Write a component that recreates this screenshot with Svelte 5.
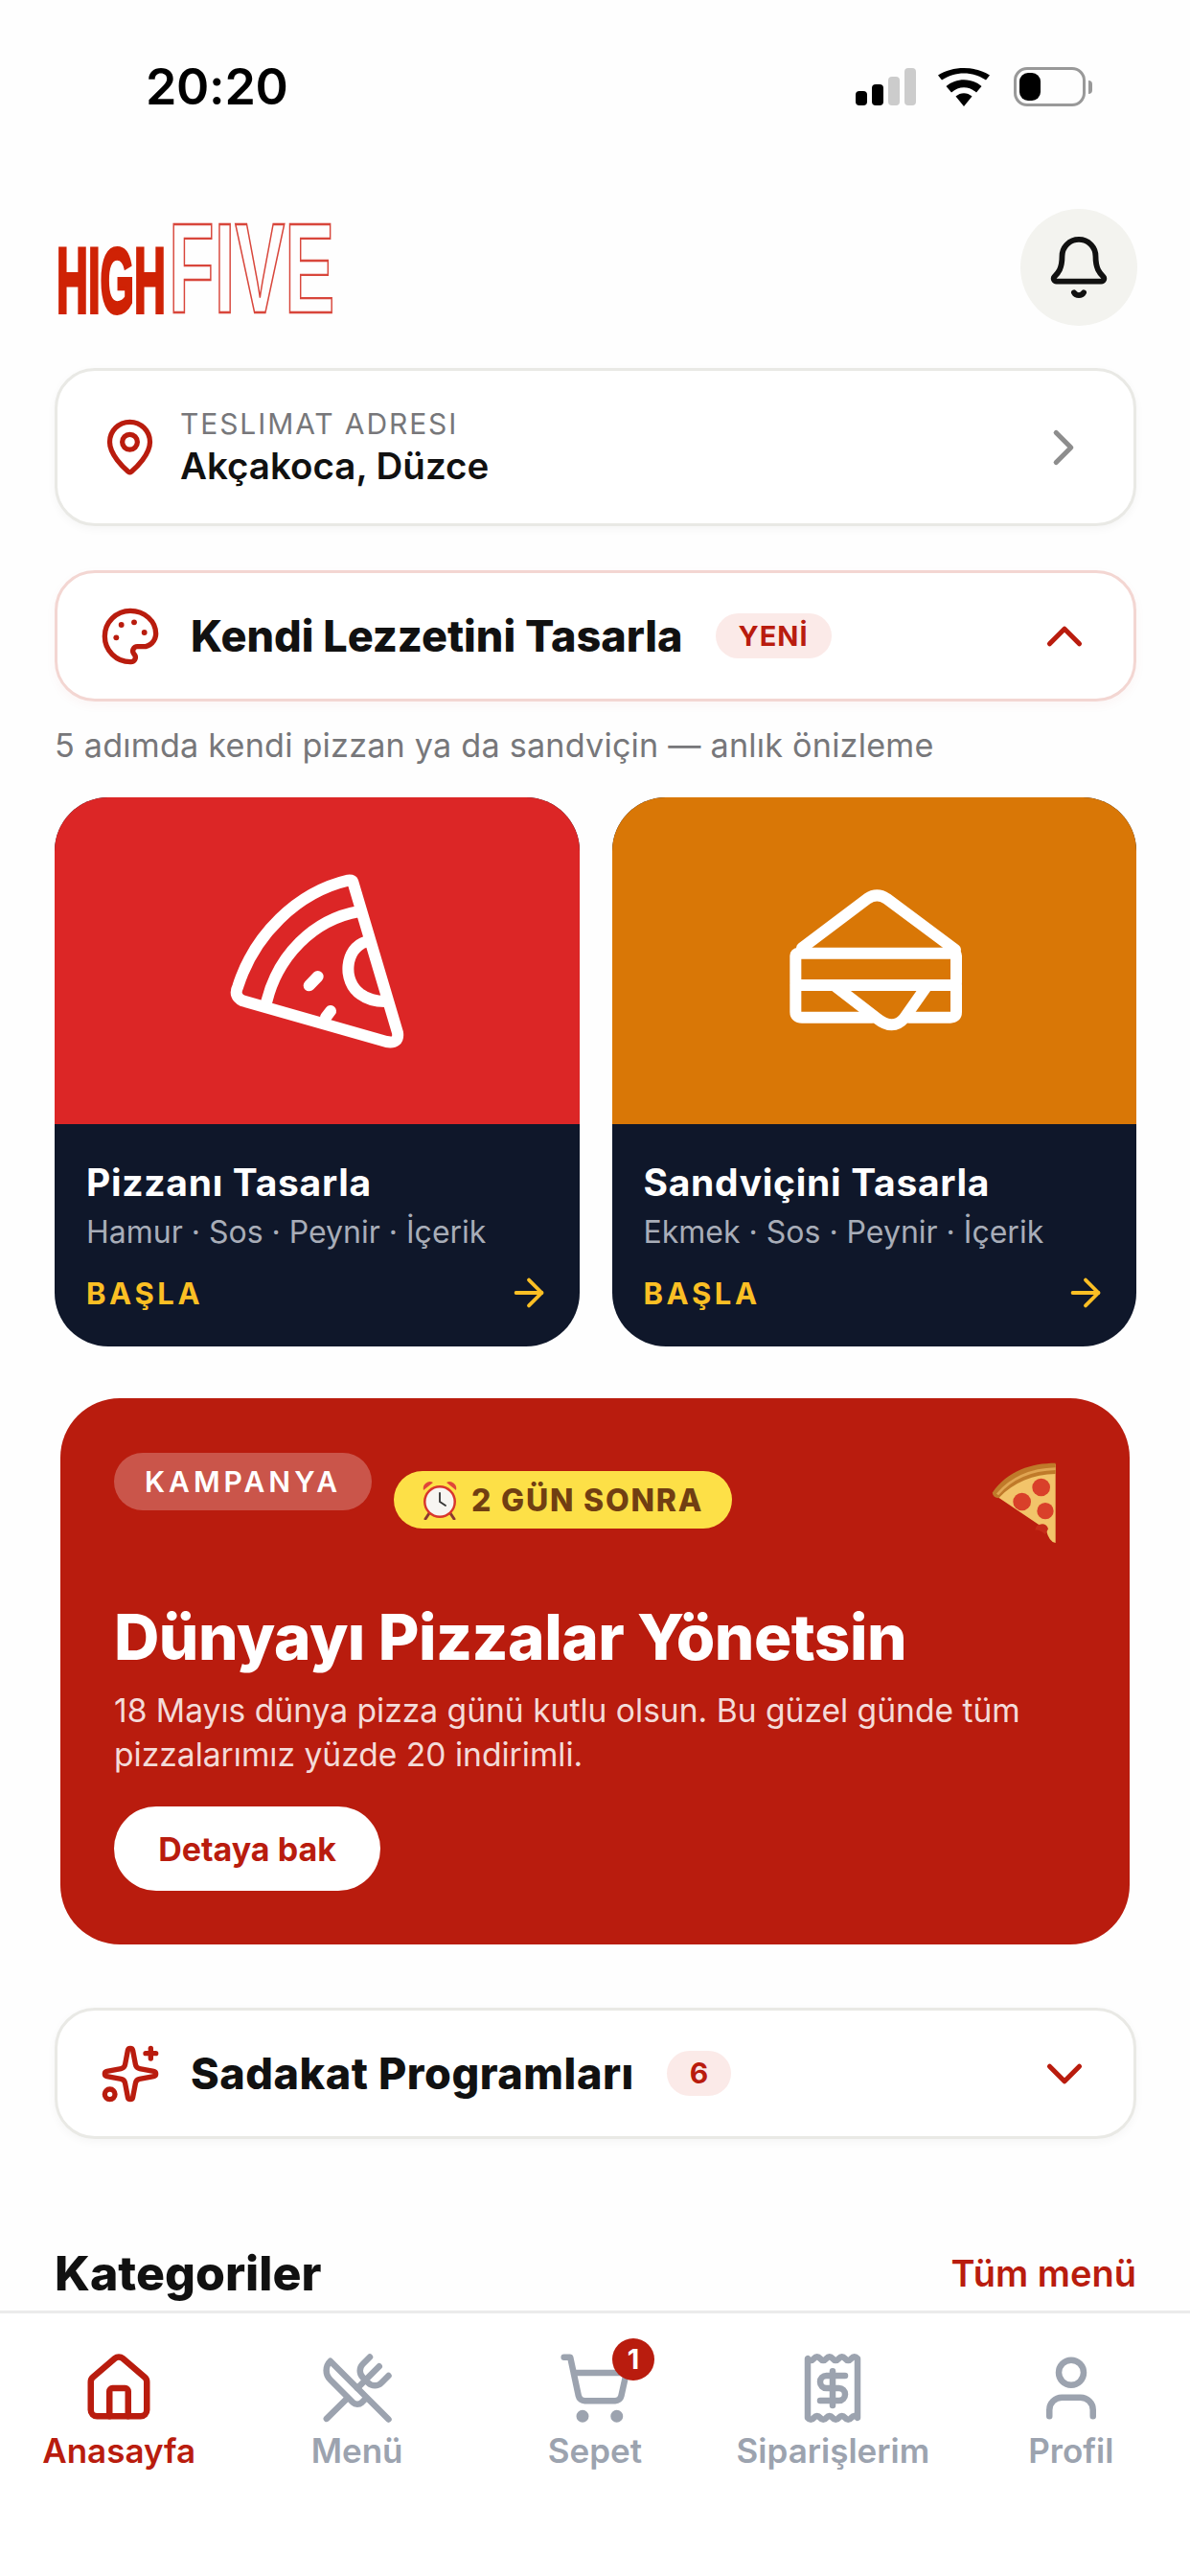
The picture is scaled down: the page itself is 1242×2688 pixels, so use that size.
<script>
  const builders = [
    { name: 'Pizzanı Tasarla', sub: 'Hamur · Sos · Peynir · İçerik', tone: 'pizza' },
    { name: 'Sandviçini Tasarla', sub: 'Ekmek · Sos · Peynir · İçerik', tone: 'sandwich' }
  ];
</script>

<div class="app">
  <div class="content">
    <div class="status">
      <span class="time">20:20</span>
      <div class="status-icons">
        <div class="bars"><i class="b1"></i><i class="b2"></i><i class="b3"></i><i class="b4"></i></div>
        <svg class="wifi" width="54" height="40" viewBox="0 0 54 40">
          <path d="M27 40 L18.500 29.500 C23.500 25 30.500 25 35.500 29.500 Z" fill="#000"/>
          <path d="M14 24 L8.500 17.500 C19 8.500 35 8.500 45.500 17.500 L40 24 C32 17 22 17 14 24 Z" fill="#000" transform="translate(0 1.500)"/>
          <path d="M4 12.500 L0 7.500 C15 -2.500 39 -2.500 54 7.500 L50 12.500 C36 3 18 3 4 12.500 Z" fill="#000"/>
        </svg>
        <div class="battery"><i class="level"></i></div>
        <i class="tip"></i>
      </div>
    </div>

    <div class="page">
      <header class="top">
        <svg class="logo" width="290" height="100" viewBox="0 0 290 100" role="img" aria-label="High Five">
          <text class="high" transform="translate(0 97) scale(.475 1)">HIGH</text>
          <text class="five" transform="translate(117 97) scale(.582 1)">FIVE</text>
        </svg>
        <div class="bell">
          <svg class="ic" width="70" height="70" viewBox="0 0 24 24">
            <path d="M10.268 21a2 2 0 0 0 3.464 0"/>
            <path d="M3.262 15.326A1 1 0 0 0 4 17h16a1 1 0 0 0 .74-1.673C19.410 13.956 18 12.499 18 8A6 6 0 0 0 6 8c0 4.499-1.411 5.956-2.738 7.326"/>
          </svg>
        </div>
      </header>

      <section class="row address">
        <svg class="ic red" width="63" height="63" viewBox="0 0 24 24">
          <path d="M20 10c0 4.993-5.539 10.193-7.399 11.799a1 1 0 0 1-1.202 0C9.539 20.193 4 14.993 4 10a8 8 0 0 1 16 0"/>
          <circle cx="12" cy="10" r="3"/>
        </svg>
        <div class="addr-text">
          <span class="addr-label">TESLIMAT ADRESI</span>
          <span class="addr-value">Akçakoca, Düzce</span>
        </div>
        <svg class="ic grey end" width="62" height="62" viewBox="0 0 24 24"><path d="m9 18 6-6-6-6"/></svg>
      </section>

      <section class="row fold design">
        <svg class="ic red" width="64" height="64" viewBox="0 0 24 24">
          <path d="M12 22a1 1 0 0 1 0-20 10 9 0 0 1 10 9 5 5 0 0 1-5 5h-2.250a1.750 1.750 0 0 0-1.400 2.800l.3.400a1.750 1.750 0 0 1-1.400 2.800z"/>
          <circle class="dot" cx="13.500" cy="6.500" r="1.100"/><circle class="dot" cx="17.500" cy="10.500" r="1.100"/>
          <circle class="dot" cx="6.500" cy="12.500" r="1.100"/><circle class="dot" cx="8.500" cy="7.500" r="1.100"/>
        </svg>
        <h2>Kendi Lezzetini Tasarla</h2>
        <span class="tag">YENİ</span>
        <svg class="ic red end" width="62" height="62" viewBox="0 0 24 24"><path d="m18 15-6-6-6 6"/></svg>
      </section>

      <p class="hint">5 adımda kendi pizzan ya da sandviçin — anlık önizleme</p>

      <div class="builders">
        {#each builders as b}
          <article class="builder">
            <div class="hero {b.tone}">
              {#if b.tone === 'pizza'}
                <svg class="art" width="280" height="220" viewBox="0 0 840 660">
                  <path d="M505 58 L645 530 Q650 565 610 558 L160 430 Q130 415 145 385 C195 225 330 90 490 53 Q503 52 505 58 Z"/>
                  <path d="M235 432 C270 290 380 175 525 150"/>
                  <path d="M545 245 C480 265 470 370 530 410 C550 425 575 432 605 432"/>
                  <path d="M368 382 L395 354"/>
                  <path d="M420 482 L435 462"/>
                </svg>
              {:else}
                <svg class="art" width="280" height="220" viewBox="0 0 840 660">
                  <path d="M165 265 L370 110 Q400 90 430 110 L645 270"/>
                  <rect x="145" y="281" width="503" height="100" rx="8"/>
                  <path d="M145 381 V465 Q145 482 165 482 H385 M500 482 H630 Q648 482 648 465 V381"/>
                  <path d="M270 385 L400 485 Q450 525 485 485 L555 385"/>
                </svg>
              {/if}
            </div>
            <div class="info">
              <h3>{b.name}</h3>
              <p>{b.sub}</p>
              <div class="go">
                <span>BAŞLA</span>
                <svg class="ic" width="46" height="46" viewBox="0 0 24 24"><path d="M5 12h14"/><path d="m12 5 7 7-7 7"/></svg>
              </div>
            </div>
          </article>
        {/each}
      </div>

      <section class="promo">
        <div class="promo-top">
          <span class="pill-kampanya">KAMPANYA</span>
          <span class="pill-time">
            <svg width="42" height="42" viewBox="0 0 42 42">
              <path d="M4 11 A7 7 0 0 1 14 3 Z" fill="#e0453a"/>
              <path d="M38 11 A7 7 0 0 0 28 3 Z" fill="#e0453a"/>
              <path d="M10 35 L6 41 M32 35 L36 41" stroke="#8a3a30" stroke-width="3" stroke-linecap="round"/>
              <circle cx="21" cy="23" r="17" fill="#d9372c"/>
              <circle cx="21" cy="23" r="14.500" fill="#f7f5f2"/>
              <path d="M21 14 V23 L27 27" fill="none" stroke="#333" stroke-width="1.800" stroke-linecap="round"/>
            </svg>
            2 GÜN SONRA
          </span>
          <svg class="slice" width="70" height="84" viewBox="100 70 210 252">
            <path d="M104 168 C150 100 220 80 300 76 L300 322 Q280 320 270 280 Z" fill="#f2c46a"/>
            <path d="M102 165 C150 95 225 72 300 72 L300 106 C230 108 170 130 122 182 Q105 180 102 165 Z" fill="#bf7a2a"/>
            <path d="M118 170 C165 115 230 92 300 90" stroke="#e0a552" stroke-width="8" fill="none"/>
            <circle cx="255" cy="148" r="28" fill="#d9402a"/>
            <circle cx="195" cy="193" r="28" fill="#d9402a"/>
            <circle cx="268" cy="222" r="26" fill="#d9402a"/>
            <path d="M236 282 A21 21 0 0 1 277 278 L268 296 Q252 280 236 282 Z" fill="#c42a18"/>
          </svg>
        </div>
        <h2 class="promo-title">Dünyayı Pizzalar Yönetsin</h2>
        <p class="promo-text">18 Mayıs dünya pizza günü kutlu olsun. Bu güzel günde tüm pizzalarımız yüzde 20 indirimli.</p>
        <div class="promo-btn">Detaya bak</div>
      </section>

      <section class="row fold loyalty">
        <svg class="ic red" width="64" height="64" viewBox="0 0 24 24">
          <path d="M11.017 2.814a1 1 0 0 1 1.966 0l1.051 5.558a2 2 0 0 0 1.594 1.594l5.558 1.051a1 1 0 0 1 0 1.966l-5.558 1.051a2 2 0 0 0-1.594 1.594l-1.051 5.558a1 1 0 0 1-1.966 0l-1.051-5.558a2 2 0 0 0-1.594-1.594l-5.558-1.051a1 1 0 0 1 0-1.966l5.558-1.051a2 2 0 0 0 1.594-1.594z"/>
          <path d="M20 2v4"/><path d="M22 4h-4"/><circle cx="4" cy="20" r="2"/>
        </svg>
        <h2>Sadakat Programları</h2>
        <span class="tag count">6</span>
        <svg class="ic red end" width="62" height="62" viewBox="0 0 24 24"><path d="m6 9 6 6 6-6"/></svg>
      </section>

      <div class="section-head">
        <h2>Kategoriler</h2>
        <span>Tüm menü</span>
      </div>
    </div>
  </div>

  <nav class="nav">
    <div class="tab active">
      <svg class="ic" width="78" height="78" viewBox="0 0 24 24">
        <path d="M15 21v-8a1 1 0 0 0-1-1h-4a1 1 0 0 0-1 1v8"/>
        <path d="M3 10a2 2 0 0 1 .709-1.528l7-6a2 2 0 0 1 2.582 0l7 6A2 2 0 0 1 21 10v9a2 2 0 0 1-2 2H5a2 2 0 0 1-2-2z"/>
      </svg>
      <span>Anasayfa</span>
    </div>
    <div class="tab">
      <svg class="ic" width="78" height="78" viewBox="0 0 24 24">
        <path d="m16 2-2.300 2.300a3 3 0 0 0 0 4.200l1.800 1.800a3 3 0 0 0 4.200 0L22 8"/>
        <path d="M15 15 3.300 3.300a4.200 4.200 0 0 0 0 6l7.300 7.300c.7.7 2 .7 2.800 0L15 15Zm0 0 7 7"/>
        <path d="m2.100 21.800 6.400-6.300"/><path d="m19 5-7 7"/>
      </svg>
      <span>Menü</span>
    </div>
    <div class="tab">
      <div class="cart">
        <svg class="ic" width="78" height="78" viewBox="0 0 24 24">
          <circle cx="8" cy="21" r="1"/><circle cx="19" cy="21" r="1"/>
          <path d="M2.050 2.050h2l2.660 12.420a2 2 0 0 0 2 1.580h9.780a2 2 0 0 0 1.950-1.570l1.650-7.430H5.120"/>
        </svg>
        <b class="badge">1</b>
      </div>
      <span>Sepet</span>
    </div>
    <div class="tab">
      <svg class="ic" width="78" height="78" viewBox="0 0 24 24">
        <path d="M4 2.500V21.500q1 1.200 2 0t2 0 2 0 2 0 2 0 2 0 2 0 2 0V2.500q-1-1.200-2 0t-2 0-2 0-2 0-2 0-2 0-2 0-2 0Z"/>
        <path d="M16 8h-6a2 2 0 1 0 0 4h4a2 2 0 1 1 0 4H8"/><path d="M12 17.500v-11"/>
      </svg>
      <span>Siparişlerim</span>
    </div>
    <div class="tab">
      <svg class="ic" width="78" height="78" viewBox="0 0 24 24">
        <path d="M19 21v-2a4 4 0 0 0-4-4H9a4 4 0 0 0-4 4v2"/><circle cx="12" cy="7" r="4"/>
      </svg>
      <span>Profil</span>
    </div>
  </nav>
</div>

<style>
  :global(body) { margin: 0; background: #fff; }
  h2, h3, p { margin: 0; }

  .app {
    width: 1242px;
    height: 2688px;
    display: flex;
    flex-direction: column;
    background: #fefefe;
    font-family: Inter, "Noto Sans", sans-serif;
    color: #111;
    overflow: hidden;
  }
  .content { flex: 1; min-height: 0; overflow: hidden; }

  .ic { fill: none; stroke: currentColor; stroke-width: 2; stroke-linecap: round; stroke-linejoin: round; flex: none; display: block; }
  .ic .dot { fill: currentColor; stroke: none; }
  .red { color: #b91c0e; }
  .grey { color: #8d8d8d; }
  .end { margin-left: auto; }

  .status { height: 218px; display: flex; align-items: flex-start; padding: 61px 102px 0 152px; box-sizing: border-box; justify-content: space-between; }
  .time { font-size: 52px; line-height: 60px; font-weight: 600; color: #000; letter-spacing: -.3px; }
  .status-icons { display: flex; align-items: center; padding-top: 9px; }
  .bars { display: flex; align-items: flex-end; gap: 5px; height: 39px; margin-right: 23px; }
  .bars i { width: 12px; border-radius: 4px; background: #000; display: block; }
  .b1 { height: 15px; }
  .b2 { height: 22px; }
  .b3 { height: 30px; background: #ccc !important; }
  .b4 { height: 39px; background: #ccc !important; }
  .wifi { margin-right: 25px; display: block; }
  .battery { width: 75px; height: 41px; box-sizing: border-box; border: 3px solid #999; border-radius: 14px; padding: 3px; }
  .level { display: block; width: 22px; height: 29px; background: #000; border-radius: 9px; }
  .tip { display: block; width: 4px; height: 14px; background: #999; border-radius: 0 4px 4px 0; margin-left: 3px; }

  .page { padding: 0 56px 0 57px; }
  .top { display: flex; align-items: center; justify-content: space-between; height: 122px; }
  .logo { display: block; margin-left: 2px; overflow: visible; }
  .high, .five { font-family: "Liberation Sans", Arial, sans-serif; font-weight: 700; }
  .high { font-size: 96px; fill: #cf2205; stroke: #cf2205; stroke-width: 3px; vector-effect: non-scaling-stroke; }
  .five { font-size: 134px; fill: none; stroke: #d8463b; stroke-width: 2px; vector-effect: non-scaling-stroke; }
  .bell { width: 122px; height: 122px; border-radius: 50%; background: #f3f3ef; display: flex; align-items: center; justify-content: center; margin-right: -1px; color: #111; }

  .row {
    display: flex;
    align-items: center;
    box-sizing: border-box;
    background: #fff;
    border: 3px solid #e9e9e5;
    border-radius: 42px;
    box-shadow: 0 3px 10px rgba(0, 0, 0, .04);
  }
  .address { height: 165px; margin-top: 44px; padding: 0 42px 0 44px; }
  .addr-text { display: flex; flex-direction: column; margin-left: 21px; }
  .addr-label { font-size: 30px; line-height: 38px; letter-spacing: 1.900px; color: #77777a; }
  .addr-value { font-size: 38.500px; line-height: 50px; font-weight: 600; color: #111; }

  .fold { padding: 0 41px 0 44px; }
  .fold h2 { font-size: 45px; font-weight: 800; margin-left: 31px; }
  .design h2 { letter-spacing: -.02px; }
  .loyalty h2 { letter-spacing: .55px; }
  .design { height: 137px; margin-top: 46px; border-color: #f3d6d2; box-shadow: 0 4px 12px rgba(185, 28, 14, .04); }
  .loyalty { height: 137px; margin-top: 66px; }
  .tag { background: #fbeae8; color: #b91c0e; border-radius: 24px; height: 47px; line-height: 47px; font-size: 29px; font-weight: 700; letter-spacing: 1px; padding: 0 24px; margin-left: 34px; }
  .tag.count { padding: 0 24px; letter-spacing: 0; font-size: 30px; }

  .hint { font-size: 34.200px; line-height: 44px; color: #77777a; margin-top: 24px; letter-spacing: .2px; }

  .builders { display: grid; grid-template-columns: 1fr 1fr; gap: 34px; margin-top: 32px; }
  .builder { border-radius: 56px; overflow: hidden; background: #0f172a; height: 573px; display: flex; flex-direction: column; }
  .hero { height: 341px; position: relative; flex: none; }
  .pizza { background: #dc2626; }
  .sandwich { background: #d97706; }
  .art { position: absolute; left: 143px; top: 69px; fill: none; stroke: #fff; stroke-width: 36; stroke-linecap: round; stroke-linejoin: round; display: block; }
  .info { padding: 37px 30px 0 33px; color: #fff; }
  .info h3 { font-size: 39px; line-height: 48px; font-weight: 700; letter-spacing: .7px; }
  .info p { font-size: 32px; line-height: 40px; color: #a8adb8; margin-top: 8px; }
  .go { display: flex; align-items: center; justify-content: space-between; margin-top: 20px; color: #fbbf24; }
  .go span { font-size: 31px; font-weight: 700; letter-spacing: 3.600px; }

  .promo { margin: 54px 7px 0 6px; height: 570px; box-sizing: border-box; background: #b91c0e; border-radius: 62px; padding: 57px 74px 0 56px; color: #fff; }
  .promo-top { display: flex; align-items: flex-start; height: 153px; }
  .pill-kampanya { height: 60px; line-height: 60px; border-radius: 30px; background: rgba(255, 255, 255, .25); font-size: 30px; font-weight: 600; letter-spacing: 4px; padding: 0 32px; box-sizing: border-box; }
  .pill-time { height: 60px; border-radius: 30px; background: #fde047; color: #713f12; font-size: 32px; font-weight: 800; letter-spacing: 1.800px; padding: 0 30px 0 27px; box-sizing: border-box; display: flex; align-items: center; gap: 12px; margin: 19px 0 0 23px; }
  .slice { margin: 10px 0 0 auto; display: block; }
  .promo-title { font-size: 65.500px; line-height: 80px; font-weight: 800; letter-spacing: -.5px; }
  .promo-text { font-size: 33.600px; line-height: 46px; color: rgba(255, 255, 255, .85); margin-top: 13px; width: 990px; }
  .promo-btn { width: 278px; height: 88px; border-radius: 44px; background: #fff; color: #b91c0e; font-size: 34px; font-weight: 700; display: flex; align-items: center; justify-content: center; margin-top: 31px; }

  .section-head { display: flex; justify-content: space-between; align-items: center; margin-top: 110px; height: 60px; }
  .section-head h2 { font-size: 50px; font-weight: 800; }
  .section-head span { font-size: 38px; font-weight: 600; color: #b91c0e; }

  .nav { height: 277px; flex: none; box-sizing: border-box; border-top: 3px solid #ebebeb; background: #fff; display: grid; grid-template-columns: repeat(5, 1fr); padding-top: 39px; }
  .tab { display: flex; flex-direction: column; align-items: center; color: #9ca3af; }
  .tab span { font-size: 35px; line-height: 40px; font-weight: 600; margin-top: 6px; }
  .tab.active { color: #b91c0e; }
  .cart { position: relative; }
  .badge { position: absolute; left: 57px; top: -13px; width: 44px; height: 44px; border-radius: 50%; background: #b91c0e; color: #fff; font-size: 29px; line-height: 44px; text-align: center; font-weight: 700; }
</style>
